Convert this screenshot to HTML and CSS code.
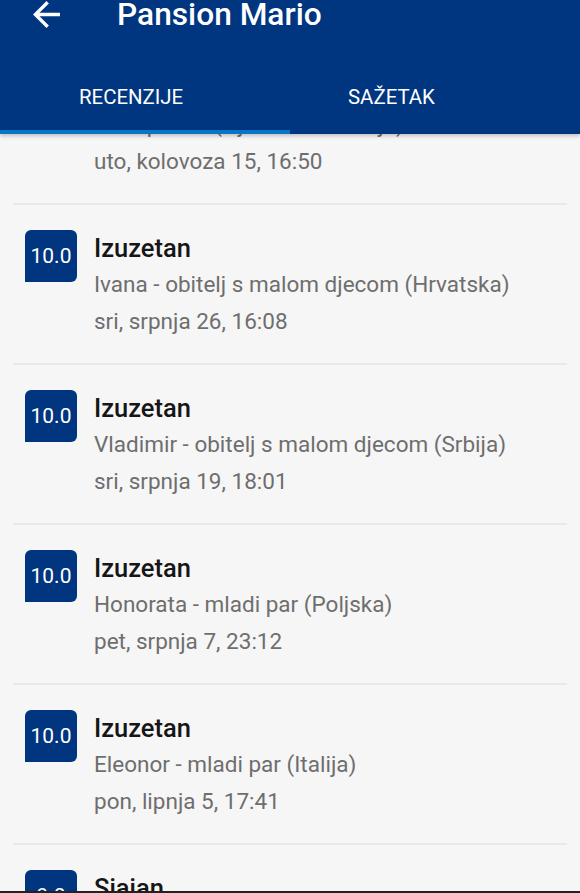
FILE: index.html
```html
<!DOCTYPE html>
<html lang="hr">
<head>
<meta charset="utf-8">
<title>Pansion Mario</title>
<link rel="stylesheet" href="styles.css">
</head>
<body>
<div class="screen">
  <header class="header">
    <div class="toolbar">
      <svg class="back" viewBox="4 4 16 16" width="27" height="27" aria-hidden="true"><path fill="#fff" d="M20 11H7.83l5.59-5.59L12 4l-8 8 8 8 1.41-1.41L7.83 13H20v-2z"/></svg>
      <h1 class="title">Pansion Mario</h1>
    </div>
    <nav class="tabs">
      <div class="tab tab-active"><span class="tab-label tab-label-first">RECENZIJE</span></div>
      <div class="tab"><span class="tab-label tab-label-second">SAŽETAK</span></div>
    </nav>
  </header>
  <div class="viewport">
    <main class="list">
      <div class="review">
        <div class="badge">10.0</div>
        <div class="review-text">
          <div class="review-title">Izuzetan</div>
          <div class="review-meta">Eva - putnik (Njemačka i Srbija)</div>
          <div class="review-meta">uto, kolovoza 15, 16:50</div>
        </div>
      </div>
      <div class="review">
        <div class="badge">10.0</div>
        <div class="review-text">
          <div class="review-title">Izuzetan</div>
          <div class="review-meta">Ivana - obitelj s malom djecom (Hrvatska)</div>
          <div class="review-meta">sri, srpnja 26, 16:08</div>
        </div>
      </div>
      <div class="review">
        <div class="badge">10.0</div>
        <div class="review-text">
          <div class="review-title">Izuzetan</div>
          <div class="review-meta">Vladimir - obitelj s malom djecom (Srbija)</div>
          <div class="review-meta">sri, srpnja 19, 18:01</div>
        </div>
      </div>
      <div class="review">
        <div class="badge">10.0</div>
        <div class="review-text">
          <div class="review-title">Izuzetan</div>
          <div class="review-meta">Honorata - mladi par (Poljska)</div>
          <div class="review-meta">pet, srpnja 7, 23:12</div>
        </div>
      </div>
      <div class="review">
        <div class="badge">10.0</div>
        <div class="review-text">
          <div class="review-title">Izuzetan</div>
          <div class="review-meta">Eleonor - mladi par (Italija)</div>
          <div class="review-meta">pon, lipnja 5, 17:41</div>
        </div>
      </div>
      <div class="review">
        <div class="badge">9.0</div>
        <div class="review-text">
          <div class="review-title">Sjajan</div>
          <div class="review-meta">Marko - par (Hrvatska)</div>
          <div class="review-meta">sub, lipnja 3, 10:20</div>
        </div>
      </div>
    </main>
  </div>
</div>
</body>
</html>
```
FILE: styles.css
```css
html, body {
  margin: 0;
  padding: 0;
}
body {
  background: #f6f6f6;
  font-family: Roboto, "Liberation Sans", Arial, sans-serif;
}
.screen {
  width: 580px;
  height: 893px;
  overflow: hidden;
  background: #f6f6f6;
  display: flex;
  flex-direction: column;
}
.header {
  position: relative;
  z-index: 2;
  height: 134px;
  background: #003580;
  box-shadow: 0 2px 4px rgba(0, 0, 0, 0.22);
  flex: none;
}
.toolbar {
  height: 60px;
  display: flex;
  align-items: flex-start;
}
.back {
  margin: 1px 0 0 33px;
  flex: none;
}
.title {
  margin: 0 0 0 57px;
  color: #fff;
  font-size: 31.7px;
  font-weight: 500;
  line-height: 30px;
}
.tabs {
  height: 74px;
  display: flex;
}
.tab {
  width: 290px;
  display: flex;
  align-items: center;
  box-sizing: border-box;
  border-bottom: 4px solid transparent;
}
.tab-active {
  border-bottom-color: #0a74c8;
}
.tab-label {
  color: #fff;
  font-size: 20.4px;
  font-weight: 400;
  padding-top: 4px;
}
.tab-label-first {
  padding-left: 79px;
}
.tab-label-second {
  padding-left: 58px;
}
.viewport {
  flex: 1;
  min-height: 0;
  overflow: hidden;
  border-bottom: 2px solid #222;
}
.list {
  margin-top: -89px;
  padding: 0 13px;
}
.review {
  height: 160px;
  box-sizing: border-box;
  border-bottom: 2px solid #e9e9e9;
  display: flex;
  align-items: flex-start;
  padding: 25px 0 0 12px;
}
.badge {
  width: 52px;
  height: 52px;
  flex: none;
  background: #003580;
  border-radius: 6px 6px 6px 0;
  color: #fff;
  font-size: 21px;
  display: flex;
  align-items: center;
  justify-content: center;
}
.review-text {
  margin-left: 17px;
  margin-top: 3px;
}
.review-title {
  font-size: 25.5px;
  font-weight: 500;
  color: #161616;
  line-height: 30px;
  margin-bottom: 3px;
}
.review-meta {
  font-size: 22.5px;
  color: #6e6e6e;
  line-height: 37px;
}
```
